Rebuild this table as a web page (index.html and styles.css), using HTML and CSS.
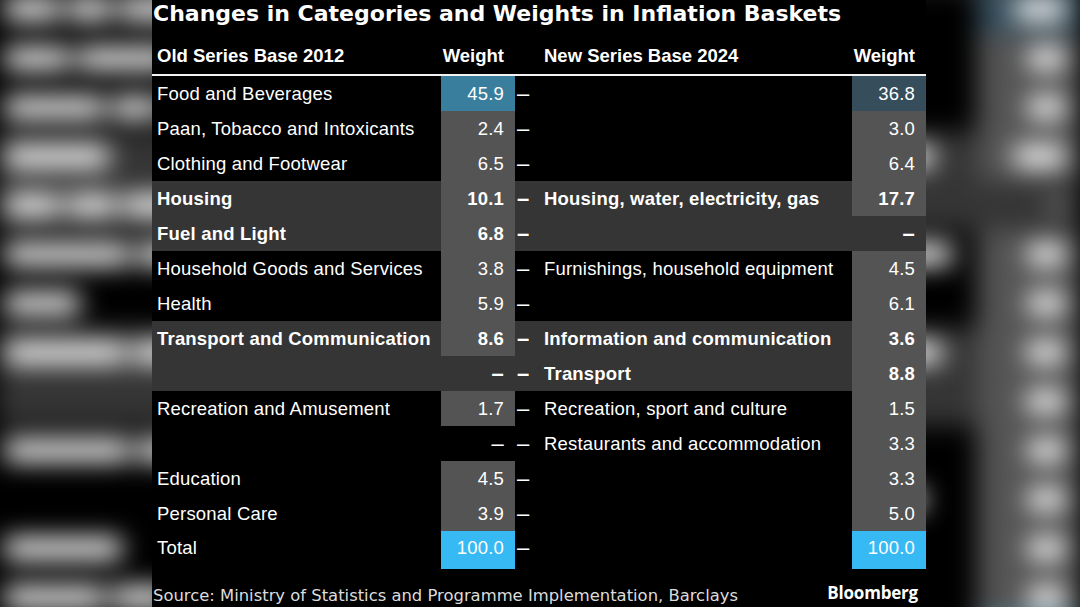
FILE: index.html
```html
<!DOCTYPE html>
<html lang="en">
<head>
<meta charset="utf-8">
<title>Changes in Categories and Weights in Inflation Baskets</title>
<link rel="stylesheet" href="styles.css">
</head>
<body>
<div class="stage">
  <div class="backdrop" aria-hidden="true">
    <div class="chart chart-blur">
      <div class="title"></div>
      <div class="row head"><div></div><div></div><div></div><div></div><div></div></div>
      <div class="rule"></div>
      <div class="row"><div class="lbl"><i class="blob" style="width:40px"></i><i class="blob" style="width:32px"></i><i class="blob" style="width:92px"></i></div><div class="w c-blue"><i class="blob" style="width:36px"></i></div><div class="dash"><i class="bdash"></i></div><div class="lbl2"></div><div class="w c-steel"><i class="blob" style="width:36px"></i></div></div>
      <div class="row"><div class="lbl"><i class="blob" style="width:47px"></i><i class="blob" style="width:69px"></i><i class="blob" style="width:32px"></i><i class="blob" style="width:96px"></i></div><div class="w c-gray"><i class="blob" style="width:27px"></i></div><div class="dash"><i class="bdash"></i></div><div class="lbl2"></div><div class="w c-gray"><i class="blob" style="width:27px"></i></div></div>
      <div class="row"><div class="lbl"><i class="blob" style="width:72px"></i><i class="blob" style="width:32px"></i><i class="blob" style="width:82px"></i></div><div class="w c-gray"><i class="blob" style="width:27px"></i></div><div class="dash"><i class="bdash"></i></div><div class="lbl2"></div><div class="w c-gray"><i class="blob" style="width:27px"></i></div></div>
      <div class="row band"><div class="lbl"><i class="blob" style="width:75px"></i></div><div class="w c-gray"><i class="blob" style="width:37px"></i></div><div class="dash"><i class="bdash"></i></div><div class="lbl2"><i class="blob" style="width:78px"></i><i class="blob" style="width:56px"></i><i class="blob" style="width:95px"></i><i class="blob" style="width:33px"></i></div><div class="w c-gray"><i class="blob" style="width:37px"></i></div></div>
      <div class="row band"><div class="lbl"><i class="blob" style="width:40px"></i><i class="blob" style="width:35px"></i><i class="blob" style="width:45px"></i></div><div class="w c-gray"><i class="blob" style="width:28px"></i></div><div class="dash"><i class="bdash"></i></div><div class="lbl2"></div><div class="w"><i class="bdash"></i></div></div>
      <div class="row"><div class="lbl"><i class="blob" style="width:90px"></i><i class="blob" style="width:55px"></i><i class="blob" style="width:32px"></i><i class="blob" style="width:72px"></i></div><div class="w c-gray"><i class="blob" style="width:27px"></i></div><div class="dash"><i class="bdash"></i></div><div class="lbl2"><i class="blob" style="width:105px"></i><i class="blob" style="width:90px"></i><i class="blob" style="width:85px"></i></div><div class="w c-gray"><i class="blob" style="width:27px"></i></div></div>
      <div class="row"><div class="lbl"><i class="blob" style="width:54px"></i></div><div class="w c-gray"><i class="blob" style="width:27px"></i></div><div class="dash"><i class="bdash"></i></div><div class="lbl2"></div><div class="w c-gray"><i class="blob" style="width:27px"></i></div></div>
      <div class="row band"><div class="lbl"><i class="blob" style="width:87px"></i><i class="blob" style="width:35px"></i><i class="blob" style="width:135px"></i></div><div class="w c-gray"><i class="blob" style="width:28px"></i></div><div class="dash"><i class="bdash"></i></div><div class="lbl2"><i class="blob" style="width:98px"></i><i class="blob" style="width:35px"></i><i class="blob" style="width:140px"></i></div><div class="w c-gray"><i class="blob" style="width:28px"></i></div></div>
      <div class="row band"><div class="lbl"></div><div class="w"><i class="bdash"></i></div><div class="dash"><i class="bdash"></i></div><div class="lbl2"><i class="blob" style="width:87px"></i></div><div class="w c-gray"><i class="blob" style="width:28px"></i></div></div>
      <div class="row"><div class="lbl"><i class="blob" style="width:90px"></i><i class="blob" style="width:32px"></i><i class="blob" style="width:95px"></i></div><div class="w c-gray"><i class="blob" style="width:27px"></i></div><div class="dash"><i class="bdash"></i></div><div class="lbl2"><i class="blob" style="width:95px"></i><i class="blob" style="width:45px"></i><i class="blob" style="width:32px"></i><i class="blob" style="width:60px"></i></div><div class="w c-gray"><i class="blob" style="width:27px"></i></div></div>
      <div class="row"><div class="lbl"></div><div class="w"><i class="bdash"></i></div><div class="dash"><i class="bdash"></i></div><div class="lbl2"><i class="blob" style="width:100px"></i><i class="blob" style="width:32px"></i><i class="blob" style="width:128px"></i></div><div class="w c-gray"><i class="blob" style="width:27px"></i></div></div>
      <div class="row"><div class="lbl"><i class="blob" style="width:84px"></i></div><div class="w c-gray"><i class="blob" style="width:27px"></i></div><div class="dash"><i class="bdash"></i></div><div class="lbl2"></div><div class="w c-gray"><i class="blob" style="width:27px"></i></div></div>
      <div class="row"><div class="lbl"><i class="blob" style="width:72px"></i><i class="blob" style="width:43px"></i></div><div class="w c-gray"><i class="blob" style="width:27px"></i></div><div class="dash"><i class="bdash"></i></div><div class="lbl2"></div><div class="w c-gray"><i class="blob" style="width:27px"></i></div></div>
      <div class="row total"><div class="lbl"><i class="blob" style="width:40px"></i></div><div class="w c-total"><i class="blob" style="width:46px"></i></div><div class="dash"><i class="bdash"></i></div><div class="lbl2"></div><div class="w c-total"><i class="blob" style="width:46px"></i></div></div>
    </div>
  </div>

  <div class="chart chart-main">
    <h1 class="title">Changes in Categories and Weights in Inflation Baskets</h1>
    <div class="row head">
      <div class="lbl">Old Series Base 2012</div>
      <div class="w">Weight</div>
      <div class="dash"></div>
      <div class="lbl2">New Series Base 2024</div>
      <div class="w">Weight</div>
    </div>
    <div class="rule"></div>

    <div class="row">
      <div class="lbl">Food and Beverages</div>
      <div class="w c-blue">45.9</div>
      <div class="dash">&ndash;</div>
      <div class="lbl2"></div>
      <div class="w c-steel">36.8</div>
    </div>
    <div class="row">
      <div class="lbl">Paan, Tobacco and Intoxicants</div>
      <div class="w c-gray">2.4</div>
      <div class="dash">&ndash;</div>
      <div class="lbl2"></div>
      <div class="w c-gray">3.0</div>
    </div>
    <div class="row">
      <div class="lbl">Clothing and Footwear</div>
      <div class="w c-gray">6.5</div>
      <div class="dash">&ndash;</div>
      <div class="lbl2"></div>
      <div class="w c-gray">6.4</div>
    </div>
    <div class="row band">
      <div class="lbl">Housing</div>
      <div class="w c-gray">10.1</div>
      <div class="dash">&ndash;</div>
      <div class="lbl2">Housing, water, electricity, gas</div>
      <div class="w c-gray">17.7</div>
    </div>
    <div class="row band">
      <div class="lbl">Fuel and Light</div>
      <div class="w c-gray">6.8</div>
      <div class="dash">&ndash;</div>
      <div class="lbl2"></div>
      <div class="w"><span class="nd">&ndash;</span></div>
    </div>
    <div class="row">
      <div class="lbl">Household Goods and Services</div>
      <div class="w c-gray">3.8</div>
      <div class="dash">&ndash;</div>
      <div class="lbl2">Furnishings, household equipment</div>
      <div class="w c-gray">4.5</div>
    </div>
    <div class="row">
      <div class="lbl">Health</div>
      <div class="w c-gray">5.9</div>
      <div class="dash">&ndash;</div>
      <div class="lbl2"></div>
      <div class="w c-gray">6.1</div>
    </div>
    <div class="row band">
      <div class="lbl">Transport and Communication</div>
      <div class="w c-gray">8.6</div>
      <div class="dash">&ndash;</div>
      <div class="lbl2">Information and communication</div>
      <div class="w c-gray">3.6</div>
    </div>
    <div class="row band">
      <div class="lbl"></div>
      <div class="w"><span class="nd">&ndash;</span></div>
      <div class="dash">&ndash;</div>
      <div class="lbl2">Transport</div>
      <div class="w c-gray">8.8</div>
    </div>
    <div class="row">
      <div class="lbl">Recreation and Amusement</div>
      <div class="w c-gray">1.7</div>
      <div class="dash">&ndash;</div>
      <div class="lbl2">Recreation, sport and culture</div>
      <div class="w c-gray">1.5</div>
    </div>
    <div class="row">
      <div class="lbl"></div>
      <div class="w"><span class="nd">&ndash;</span></div>
      <div class="dash">&ndash;</div>
      <div class="lbl2">Restaurants and accommodation</div>
      <div class="w c-gray">3.3</div>
    </div>
    <div class="row">
      <div class="lbl">Education</div>
      <div class="w c-gray">4.5</div>
      <div class="dash">&ndash;</div>
      <div class="lbl2"></div>
      <div class="w c-gray">3.3</div>
    </div>
    <div class="row">
      <div class="lbl">Personal Care</div>
      <div class="w c-gray">3.9</div>
      <div class="dash">&ndash;</div>
      <div class="lbl2"></div>
      <div class="w c-gray">5.0</div>
    </div>
    <div class="row total">
      <div class="lbl">Total</div>
      <div class="w c-total">100.0</div>
      <div class="dash">&ndash;</div>
      <div class="lbl2"></div>
      <div class="w c-total">100.0</div>
    </div>

    <div class="footer">
      <div class="source">Source: Ministry of Statistics and Programme Implementation, Barclays</div>
      <div class="brand">Bloomberg</div>
    </div>
  </div>
</div>
</body>
</html>
```

FILE: styles.css
```css
* { box-sizing: border-box; }

html, body {
  margin: 0;
  padding: 0;
  background: #000;
}

body {
  width: 1080px;
  height: 607px;
  overflow: hidden;
  font-family: "Liberation Sans", Arial, sans-serif;
  color: #fff;
}

.stage {
  position: relative;
  width: 1080px;
  height: 607px;
  display: flex;
  padding-left: 152px;
  background: #000;
  overflow: hidden;
}

/* blurred, enlarged copy of the chart behind the main panel */
.backdrop {
  position: absolute;
  inset: 0;
  display: flex;
  padding-left: 152px;
  overflow: hidden;
}

.chart {
  width: 774px;
  height: 607px;
  display: flex;
  flex-direction: column;
  background: #000;
}

.chart-blur {
  transform: scale(1.4);
  transform-origin: 387px 303.5px;
  filter: blur(9px);
}

.chart-blur .lbl,
.chart-blur .lbl2 {
  display: flex;
  align-items: center;
  gap: 5px;
}

.chart-blur .w {
  display: flex;
  align-items: center;
  justify-content: flex-end;
}

.chart-blur .dash {
  display: flex;
  align-items: center;
}

.blob {
  display: block;
  height: 15px;
  background: #ffffff;
  border-radius: 4px;
}

.bdash {
  display: block;
  width: 12px;
  height: 4px;
  background: #ffffff;
}

.chart-main {
  position: relative;
  z-index: 1;
}

.title {
  margin: 0;
  height: 38px;
  padding-left: 1px;
  font-family: "DejaVu Sans", Verdana, sans-serif;
  font-weight: bold;
  font-size: 22px;
  line-height: 28px;
  white-space: nowrap;
}

.row {
  display: grid;
  grid-template-columns: 289px 74px 25px 312px 74px;
  height: 35px;
  font-size: 18.5px;
  letter-spacing: 0.2px;
  line-height: 35px;
  white-space: nowrap;
}

.row.head {
  height: 36px;
  line-height: 36px;
  font-weight: bold;
  letter-spacing: 0;
}

.row.band {
  background: #353535;
  font-weight: bold;
}

.row.total {
  height: 38px;
  line-height: 33px;
}

.lbl {
  padding-left: 5px;
}

.lbl2 {
  padding-left: 4px;
}

.w {
  text-align: right;
  padding-right: 11px;
}

.dash {
  padding-left: 2px;
  font-size: 22px;
}

.nd {
  font-size: 22px;
}

.c-gray { background: #545454; }
.c-blue { background: #3a7e9e; }
.c-steel { background: #364e5c; }
.c-total { background: #37b9f4; }

.rule {
  height: 2px;
  background: #f2f2f2;
}

.footer {
  flex: 1;
  display: flex;
  justify-content: space-between;
  align-items: flex-start;
  padding: 17px 8px 0 1px;
}

.source {
  font-family: "DejaVu Sans", Verdana, sans-serif;
  font-size: 16.4px;
  line-height: 20px;
  color: #dcdcdc;
  white-space: nowrap;
}

.brand {
  font-family: "Open Sans", "DejaVu Sans", sans-serif;
  font-weight: 700;
  font-size: 17px;
  line-height: 20px;
  margin-top: -3px;
  letter-spacing: -0.2px;
}
```
